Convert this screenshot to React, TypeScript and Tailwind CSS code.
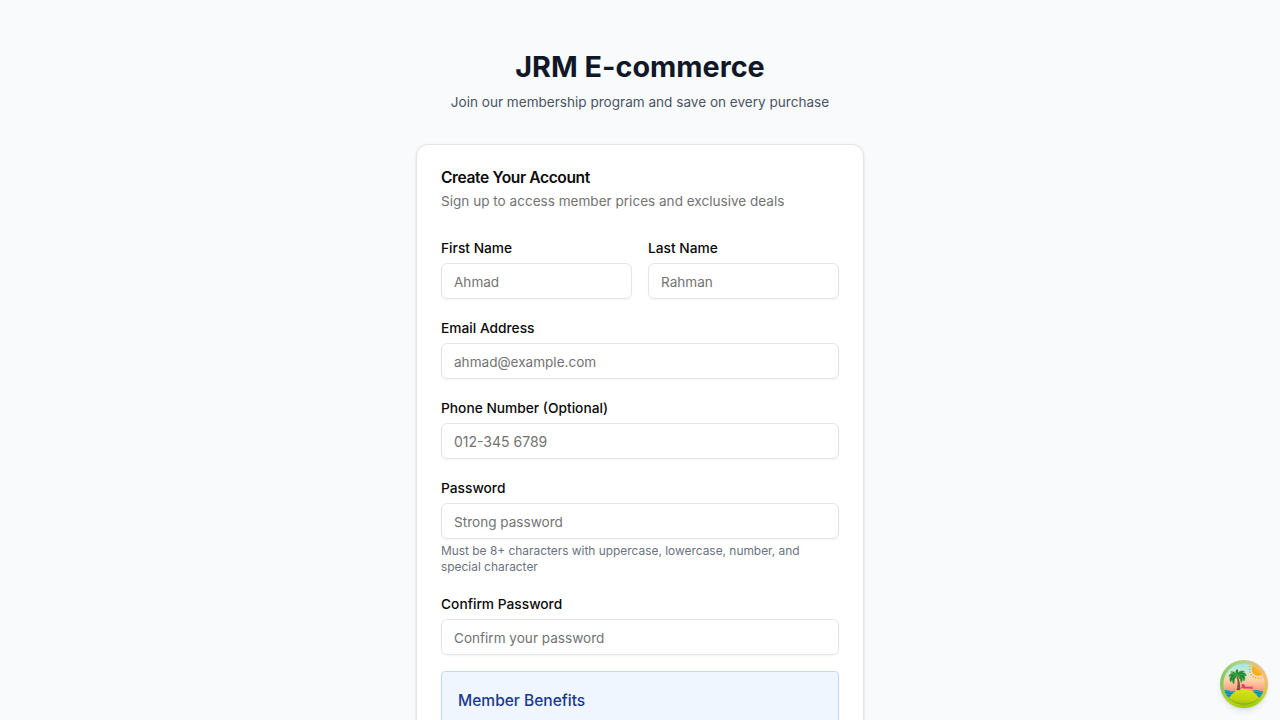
import React from "react";

type FieldProps = {
  id: string;
  label: string;
  placeholder: string;
  type?: string;
  hint?: string;
};

function Field({ id, label, placeholder, type = "text", hint }: FieldProps) {
  return (
    <div className="min-w-0">
      <label htmlFor={id} className="mb-1 flex h-6 items-center pt-1 text-[13.75px] leading-none font-medium text-neutral-950">
        {label}
      </label>
      <input
        id={id}
        type={type}
        placeholder={placeholder}
        className={`block h-9 w-full min-w-0 rounded-md border border-neutral-200 bg-transparent px-3 leading-5 shadow-xs outline-none placeholder:text-neutral-500 ${type === "tel" ? "py-1 text-sm" : "pt-1.5 pb-1 text-[13.57px]"}`}
      />
      {hint && <p className="mt-1 text-[11.92px] leading-4 text-gray-500">{hint}</p>}
    </div>
  );
}

function IslandLogo() {
  return (
    <svg viewBox="0 0 48 48" className="block size-12" aria-hidden="true">
      <defs>
        <linearGradient id="ring" x1="0" y1="0.5" x2="1" y2="0.35">
          <stop offset="0" stopColor="#7fc458" />
          <stop offset="0.35" stopColor="#a5d37c" />
          <stop offset="0.65" stopColor="#e3c77c" />
          <stop offset="1" stopColor="#ffb574" />
        </linearGradient>
        <linearGradient id="ringShade" x1="0.35" y1="0" x2="0.5" y2="1">
          <stop offset="0" stopColor="#8fd69a" stopOpacity="0.4" />
          <stop offset="0.35" stopColor="#b8d86e" stopOpacity="0" />
          <stop offset="0.6" stopColor="#b5d52a" stopOpacity="0.3" />
          <stop offset="0.85" stopColor="#b4d80c" stopOpacity="0.95" />
          <stop offset="1" stopColor="#98cc00" />
        </linearGradient>
        <linearGradient id="sky" x1="0" y1="0" x2="0" y2="1">
          <stop offset="0" stopColor="#8be5e5" />
          <stop offset="0.25" stopColor="#cfe9d5" />
          <stop offset="0.42" stopColor="#ffd3a5" />
          <stop offset="0.65" stopColor="#ff9580" />
          <stop offset="1" stopColor="#ff7b78" />
        </linearGradient>
        <linearGradient id="sand" x1="0.5" y1="0" x2="0.4" y2="1">
          <stop offset="0" stopColor="#d7e31a" />
          <stop offset="0.55" stopColor="#bfd60d" />
          <stop offset="1" stopColor="#83b304" />
        </linearGradient>
        <linearGradient id="sun" x1="1" y1="0" x2="0" y2="1">
          <stop offset="0" stopColor="#ffd02b" />
          <stop offset="1" stopColor="#ff9f1c" />
        </linearGradient>
        <clipPath id="scene">
          <circle cx="24" cy="24" r="20.6" />
        </clipPath>
      </defs>
      <circle cx="24" cy="24" r="24" fill="url(#ring)" />
      <circle cx="24" cy="24" r="24" fill="url(#ringShade)" />
      <g clipPath="url(#scene)">
        <rect width="48" height="48" fill="url(#sky)" />
        <circle cx="38.5" cy="9.3" r="6.8" fill="url(#sun)" />
        <circle cx="38.5" cy="9.3" r="8.9" fill="none" stroke="#ff9f3b" strokeWidth="1.4" strokeDasharray="1.2 1.5" />
        <path d="M3 30.5q3-1.5 6 0t6 0v9H3zM33 30.5q3-1.5 6 0t7 0v9H33z" fill="#1fa3b4" />
        <path d="M3 33.2q3-1.5 6 0t6 0M4 36q3-1.5 6 0t6 0M33 33.2q3-1.5 6 0t6 0M33 36q3-1.5 6 0t6 0" fill="none" stroke="#0e7891" strokeWidth="0.8" />
        <path d="M8.8 38.5C12.5 32 18 29 24 29s11.5 3 15.2 9.5V48H8.8z" fill="url(#sand)" />
      </g>
      <path d="M10 39.2q5.9 5 14 5t14-5" fill="none" stroke="#6e991a" strokeWidth="0.5" />
      <path d="M21.6 24.2l2.2-.2 1.7 2.8h6l.9-1 .1 3.5h-1l-.8-.9-5.7.2-2.6-.6z" fill="#f43378" />
      <path d="M20.5 28.7l2.2-2.6 1.3 2.5" fill="none" stroke="#c74551" strokeWidth="0.9" />
      <path d="M16.3 16.8c1.8 3.9 1.5 8.6.3 13.3l3.5.2c.4-5-.2-9.3-2.2-13.9z" fill="#855232" />
      <path d="M17.2 19.5l1.4-.3M17.9 22l1.3-.1M18 24.6l1.3.1M17.6 27.2l1.6.3" fill="none" stroke="#ad7a32" strokeWidth="0.5" />
      <path
        d="M16.7 14.8c-1-2.1-3.3-3.8-6.1-2.8 1.6.1 2.5.5 3 1.2-2.4-.3-4.2 1-4.6 3.2l2.7-1.2c-1.7 1.7-2.6 4.5-.9 6.9.3-1.4.8-2.4 1.6-3.2-.3 2.2.3 3.8 1.6 5 0-3 .7-5.8 3-8.1 1.6.8 3.4 2.8 4.2 6.7 1.1-1.3 1.4-2.8.9-4.4 1 .7 1.6 1.5 1.8 2.9 1.5-1.8 1.3-4.5-.2-5.9l2.6.7c-.5-2.4-2.4-3.5-4.7-3.1.7-.7 1.5-1 2.8-1-2.5-1.7-5.6-.6-7.7 3.1z"
        fill="#208b36"
        stroke="#208b36"
        strokeWidth="0.5"
      />
      <path d="M16.7 14.9c-1.8-2-1.6-4.4.3-5.8 1.8 1.5 1.8 3.6-.3 5.8z" fill="#268c39" />
      <path d="M11.3 14.3q2.5-.7 5.4.7M12.2 18q1.3-2.2 4.5-2.9 3.8-1 6.6-.7M17 15.2q3.5.7 5.1 3.8" fill="none" stroke="#4aae35" strokeWidth="0.7" />
    </svg>
  );
}

export default function App() {
  return (
    <div className="h-screen overflow-hidden bg-gray-50 px-4 py-12 font-['Inter',sans-serif] text-neutral-950 antialiased">
      <main className="mx-auto w-full max-w-md">
        <header className="mb-8 text-center">
          <h1 className="pt-0.5 text-[28.75px] leading-[34px] font-bold text-gray-900">JRM E-commerce</h1>
          <p className="mt-2 text-[13.57px] leading-5 text-gray-600">Join our membership program and save on every purchase</p>
        </header>

        <section className="flex flex-col gap-6 rounded-xl border border-neutral-200 bg-white px-6 py-6 shadow-sm">
          <div className="flex flex-col gap-1.5">
            <h2 className="h-4 text-[15.6px] leading-[18px] font-semibold tracking-tight">Create Your Account</h2>
            <p className="text-[13.57px] leading-5 text-neutral-500">Sign up to access member prices and exclusive deals</p>
          </div>

          <form className="flex flex-col gap-4">
            <div className="grid grid-cols-2 gap-4">
              <Field id="firstName" label="First Name" placeholder="Ahmad" />
              <Field id="lastName" label="Last Name" placeholder="Rahman" />
            </div>
            <Field id="email" type="email" label="Email Address" placeholder="ahmad@example.com" />
            <Field id="phone" type="tel" label="Phone Number (Optional)" placeholder="012-345 6789" />
            <Field
              id="password"
              type="password"
              label="Password"
              placeholder="Strong password"
              hint="Must be 8+ characters with uppercase, lowercase, number, and special character"
            />
            <Field id="confirmPassword" type="password" label="Confirm Password" placeholder="Confirm your password" />
            <div className="h-40 rounded border border-blue-200 bg-blue-50 p-4">
              <h3 className="text-[15.55px] leading-[26px] font-medium text-blue-900">Member Benefits</h3>
            </div>
          </form>
        </section>
      </main>

      <button
        type="button"
        aria-label="Open developer tools"
        className="fixed right-3 bottom-3 rounded-full shadow-md"
      >
        <IslandLogo />
      </button>
    </div>
  );
}
